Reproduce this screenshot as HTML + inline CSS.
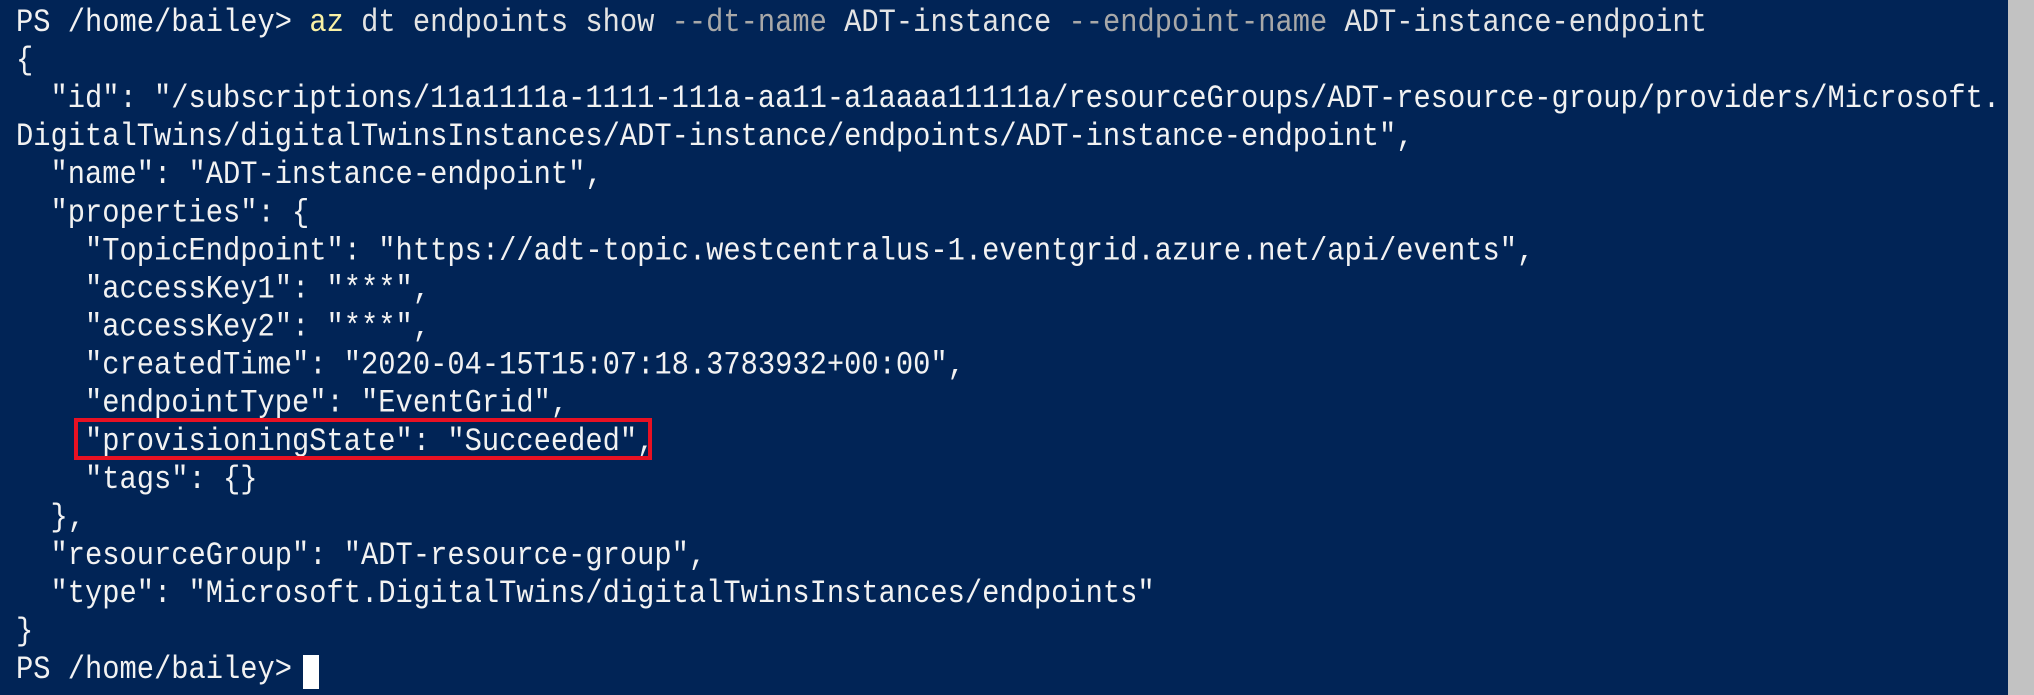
<!DOCTYPE html>
<html><head><meta charset="utf-8"><style>
html,body{margin:0;padding:0;}
body{width:2034px;height:695px;background:#012456;position:relative;overflow:hidden;}
pre{margin:0;position:absolute;left:16px;top:4px;font-family:"Liberation Mono",monospace;font-size:28.75px;line-height:34.02px;color:#f2f2f2;white-space:pre;transform:scale(1,1.12);transform-origin:0 0;}
.y{color:#f9f1a5}.g{color:#a8a8a8}.w{color:#e4e4e4}
.sb{position:absolute;left:2008px;top:0;width:26px;height:695px;background:#c2c2c2;}
.box{position:absolute;left:74px;top:418px;width:570px;height:34px;border:4px solid #e81123;}
.cur{position:absolute;left:303px;top:655px;width:16px;height:34px;background:#fff;}
</style></head><body>
<pre>PS /home/bailey&gt; <span class="y">az</span><span class="w"> dt endpoints show </span><span class="g">--dt-name</span><span class="w"> ADT-instance </span><span class="g">--endpoint-name</span><span class="w"> ADT-instance-endpoint</span>
{
  "id": "/subscriptions/11a1111a-1111-111a-aa11-a1aaaa11111a/resourceGroups/ADT-resource-group/providers/Microsoft.
DigitalTwins/digitalTwinsInstances/ADT-instance/endpoints/ADT-instance-endpoint",
  "name": "ADT-instance-endpoint",
  "properties": {
    "TopicEndpoint": "https://adt-topic.westcentralus-1.eventgrid.azure.net/api/events",
    "accessKey1": "***",
    "accessKey2": "***",
    "createdTime": "2020-04-15T15:07:18.3783932+00:00",
    "endpointType": "EventGrid",
    "provisioningState": "Succeeded",
    "tags": {}
  },
  "resourceGroup": "ADT-resource-group",
  "type": "Microsoft.DigitalTwins/digitalTwinsInstances/endpoints"
}
PS /home/bailey&gt; </pre>
<div class="box"></div>
<div class="cur"></div>
<div class="sb"></div>
</body></html>
